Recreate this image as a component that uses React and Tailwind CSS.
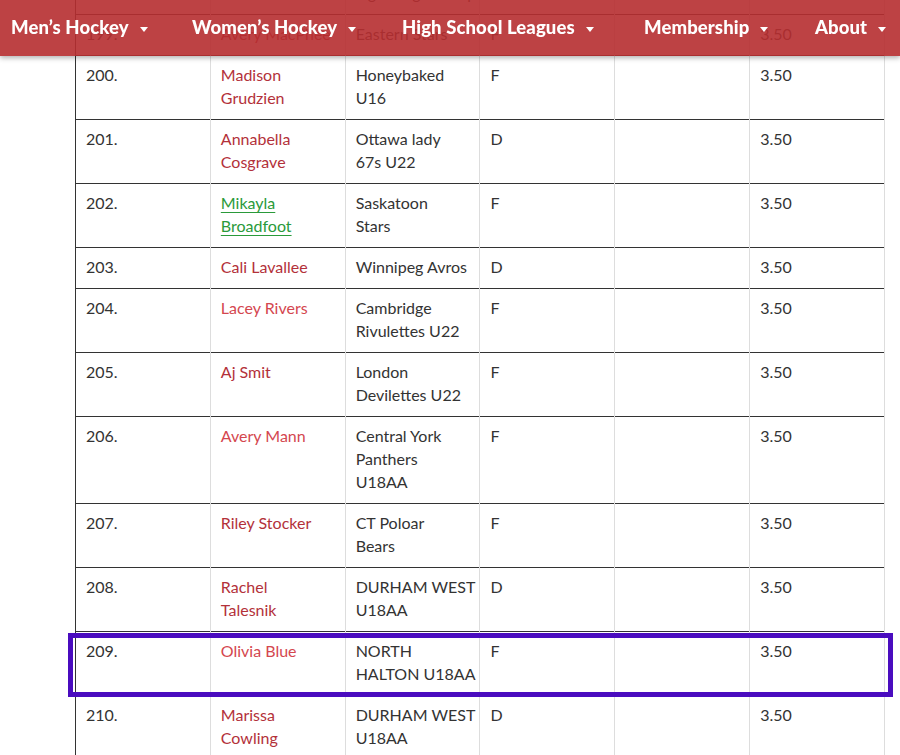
import React from 'react';

const navItems = [
  { label: 'Men’s Hockey', width: 'w-[181px]' },
  { label: 'Women’s Hockey', width: 'w-[210px]' },
  { label: 'High School Leagues', width: 'w-[242px]' },
  { label: 'Membership', width: 'w-[171px]' },
  { label: 'About', width: 'flex-1' },
];

// tone: 'dark' | 'light' | 'green'
const rows = [
  { rank: '198.', name: ['Emma Kingsley'], tone: 'dark', team: ['Durham', 'Lightning Jr. Prep'], pos: 'F', pts: '3.50' },
  { rank: '199.', name: ['Avery MacPhee'], tone: 'dark', team: ['Eastern Stars'], pos: 'F', pts: '3.50' },
  { rank: '200.', name: ['Madison', 'Grudzien'], tone: 'dark', team: ['Honeybaked', 'U16'], pos: 'F', pts: '3.50' },
  { rank: '201.', name: ['Annabella', 'Cosgrave'], tone: 'dark', team: ['Ottawa lady', '67s U22'], pos: 'D', pts: '3.50' },
  { rank: '202.', name: ['Mikayla', 'Broadfoot'], tone: 'green', team: ['Saskatoon', 'Stars'], pos: 'F', pts: '3.50' },
  { rank: '203.', name: ['Cali Lavallee'], tone: 'dark', team: ['Winnipeg Avros'], pos: 'D', pts: '3.50' },
  { rank: '204.', name: ['Lacey Rivers'], tone: 'light', team: ['Cambridge', 'Rivulettes U22'], pos: 'F', pts: '3.50' },
  { rank: '205.', name: ['Aj Smit'], tone: 'dark', team: ['London', 'Devilettes U22'], pos: 'F', pts: '3.50' },
  { rank: '206.', name: ['Avery Mann'], tone: 'light', team: ['Central York', 'Panthers', 'U18AA'], pos: 'F', pts: '3.50' },
  { rank: '207.', name: ['Riley Stocker'], tone: 'dark', team: ['CT Poloar', 'Bears'], pos: 'F', pts: '3.50' },
  { rank: '208.', name: ['Rachel', 'Talesnik'], tone: 'dark', team: ['DURHAM WEST', 'U18AA'], pos: 'D', pts: '3.50' },
  { rank: '209.', name: ['Olivia Blue'], tone: 'light', team: ['NORTH', 'HALTON U18AA'], pos: 'F', pts: '3.50' },
  { rank: '210.', name: ['Marissa', 'Cowling'], tone: 'dark', team: ['DURHAM WEST', 'U18AA'], pos: 'D', pts: '3.50' },
];

const toneClass = {
  dark: 'text-[#b3313a]',
  light: 'text-[#d4474f]',
  green: 'text-[#2a9a3a] underline decoration-[1px] underline-offset-[3px]',
};

function Lines({ lines }) {
  return lines.map((line, i) => (
    <span key={i} className="block whitespace-nowrap">
      {line}
    </span>
  ));
}

function Caret() {
  return <span className="ml-[11px] mt-[4px] inline-block h-0 w-0 border-x-[4px] border-t-[5px] border-x-transparent border-t-white" />;
}

function Nav() {
  return (
    <nav className="fixed inset-x-0 top-0 z-10 h-[56px] bg-[rgba(182,46,48,0.9)] shadow-[0_2px_5px_rgba(0,0,0,0.3)]">
      <ul className="flex h-full items-center pb-[1px] pl-[11px]">
        {navItems.map((item) => (
          <li key={item.label} className={`${item.width} flex items-center`}>
            <a href="#" className="whitespace-nowrap text-[18.5px] font-black tracking-[0.1px] text-white">
              {item.label}
            </a>
            <Caret />
          </li>
        ))}
      </ul>
    </nav>
  );
}

export default function App() {
  const cell = 'border-t border-r border-t-[#333] border-r-[#ddd] px-[10px] pt-[7px] pb-[10px] align-top';

  return (
    <div className="min-h-screen overflow-hidden bg-white font-['Lato',sans-serif] text-[16px] leading-[23px] text-[#333]">
      <Nav />
      <main className="relative -mt-[50px] ml-[75px] w-[810px]">
        <table className="w-full table-fixed border-collapse">
          <tbody>
            {rows.map((r) => (
              <tr key={r.rank}>
                <td className={`${cell} border-l border-l-[#333]`}>{r.rank}</td>
                <td className={cell}>
                  <a href="#" className={`${toneClass[r.tone]} inline-block`}>
                    <Lines lines={r.name} />
                  </a>
                </td>
                <td className={cell}>
                  <Lines lines={r.team} />
                </td>
                <td className={cell}>{r.pos}</td>
                <td className={cell}></td>
                <td className={cell}>{r.pts}</td>
              </tr>
            ))}
          </tbody>
        </table>
        <div className="pointer-events-none absolute left-[-7px] top-[683px] h-[64px] w-[825px] border-[5px] border-[#4a0cbf]" />
      </main>
    </div>
  );
}
